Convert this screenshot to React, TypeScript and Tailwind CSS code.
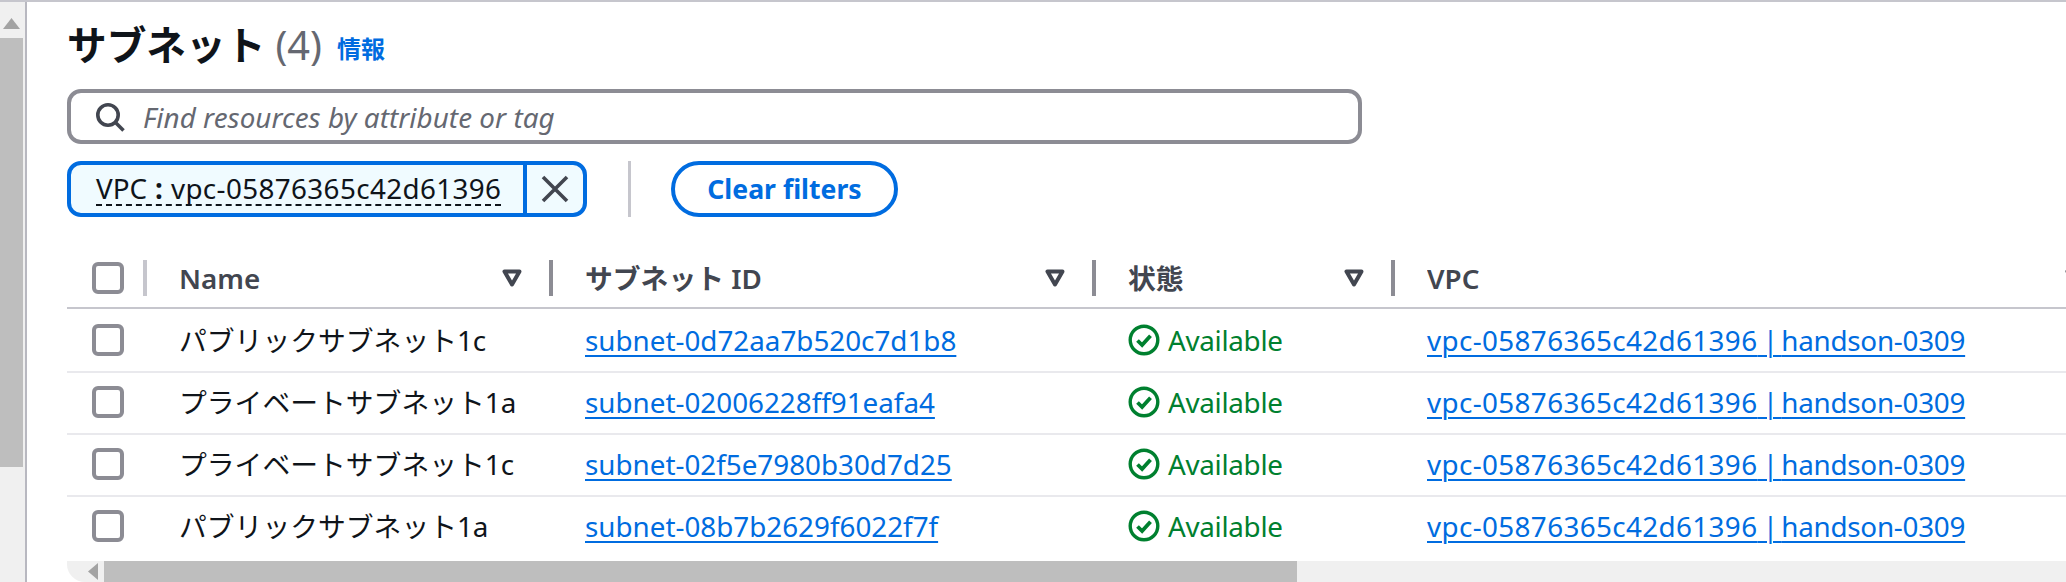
const SUBNETS = [
  { name: "パブリックサブネット1c", id: "subnet-0d72aa7b520c7d1b8" },
  { name: "プライベートサブネット1a", id: "subnet-02006228ff91eafa4" },
  { name: "プライベートサブネット1c", id: "subnet-02f5e7980b30d7d25" },
  { name: "パブリックサブネット1a", id: "subnet-08b7b2629f6022f7f" },
];

const VPC = "vpc-05876365c42d61396";

function Checkbox() {
  return <div className="box-border h-[32px] w-[32px] shrink-0 rounded-[6px] border-4 border-[#8c8c94] bg-white" />;
}

function SortIcon() {
  return (
    <svg className="h-[20px] w-[20px] shrink-0" viewBox="0 0 20 20" fill="none">
      <path d="M2.5 3.5h15L10 16.5z" stroke="#424650" strokeWidth="4" strokeLinejoin="round" />
    </svg>
  );
}

function HeaderCell({ label }: { label: string }) {
  return (
    <div className="flex items-center pr-[32px]">
      <span className="flex-1 font-semibold text-[#424650]">{label}</span>
      <SortIcon />
      <div className="ml-[27px] h-[36px] w-[4px] bg-[#8c8c94]" />
    </div>
  );
}

function AvailableIcon() {
  return (
    <svg className="h-[32px] w-[32px] shrink-0" viewBox="0 0 32 32" fill="none">
      <circle cx="16" cy="16" r="13.8" stroke="#00802f" strokeWidth="3.4" />
      <path d="M9.5 16.5l4.6 4.6 8.4-9.4" stroke="#00802f" strokeWidth="3.8" />
    </svg>
  );
}

const GRID = "grid grid-cols-[112px_406px_543px_299px_639px]";

export default function App() {
  return (
    <div className="flex h-[582px] w-[2066px] overflow-hidden border-t-2 border-[#c6c6cd] bg-white font-['Noto_Sans','Noto_Sans_CJK_JP',sans-serif] text-[27.8px] leading-[38px] text-[#0f141a]">
      <div className="flex w-[27px] shrink-0 flex-col border-r-2 border-[#b8b8c0] bg-[#f0f0f0]">
        <div className="flex h-[36px] w-[23px] items-center justify-center pt-[8px]">
          <svg className="h-[12px] w-[17px]" viewBox="0 0 17 12">
            <path d="M8.5 0L17 11H0z" fill="#a3a3a3" />
          </svg>
        </div>
        <div className="h-[429px] w-[23px] bg-[#bebebe]" />
      </div>

      <div className="flex min-w-0 flex-1 flex-col pl-[40px]">
        <div className="flex h-[87px] items-center">
          <h1 className="text-[39.7px] font-bold leading-none">サブネット</h1>
          <span className="ml-[10px] text-[39.7px] leading-none text-[#656871]">(4)</span>
          <a className="ml-[15px] mt-[6px] text-[24px] font-bold text-[#006ce0]">情報</a>
        </div>

        <div className="flex h-[55px] w-[1295px] items-center rounded-[14px] border-4 border-[#8c8c94] bg-white pl-[24px]">
          <svg className="h-[30px] w-[30px] shrink-0" viewBox="0 0 30 30" fill="none" stroke="#424650" strokeWidth="3.6">
            <circle cx="13" cy="13" r="10.2" />
            <path d="M20.5 20.5L28.5 28.5" />
          </svg>
          <span className="ml-[18px] tracking-[0.05px] italic text-[#656871]">Find resources by attribute or tag</span>
        </div>

        <div className="mt-[17px] flex h-[56px] items-stretch">
          <div className="flex w-[520px] overflow-hidden rounded-[14px] border-4 border-[#006ce0] bg-[#f0fbff]">
            <div className="flex flex-1 items-center pl-[25px]">
              <span className="whitespace-nowrap border-b-2 border-dashed border-[#0f141a] leading-[32px]">
                VPC<span className="px-[8px] font-bold">:</span>
                <span className="tracking-[0.38px]">{VPC}</span>
              </span>
            </div>
            <div className="flex w-[60px] items-center justify-center border-l-4 border-[#006ce0]">
              <svg className="h-[28px] w-[28px]" viewBox="0 0 28 28" fill="none" stroke="#424650" strokeWidth="3.6">
                <path d="M2 2l24 24M26 2L2 26" />
              </svg>
            </div>
          </div>
          <div className="ml-[41px] w-[3px] bg-[#c6c6cd]" />
          <button className="ml-[40px] flex w-[227px] items-center justify-center rounded-full border-4 border-[#006ce0] text-[26.6px] font-bold text-[#006ce0]">
            Clear filters
          </button>
        </div>

        <div className={`${GRID} mt-[31px] h-[61px] w-[1999px] items-center border-b-2 border-[#c6c6cd]`}>
          <div className="flex items-center pl-[25px]">
            <Checkbox />
            <div className="ml-[19px] h-[36px] w-[4px] bg-[#c6c6cd]" />
          </div>
          <HeaderCell label="Name" />
          <HeaderCell label="サブネット ID" />
          <HeaderCell label="状態" />
          <div className="flex items-center justify-between overflow-hidden">
            <span className="font-semibold text-[#424650]">VPC</span>
            <div className="mr-[-19px]">
              <SortIcon />
            </div>
          </div>
        </div>

        <div className="pt-[2px]">
          {SUBNETS.map((s, i) => (
            <div
              key={s.id}
              className={`${GRID} h-[62px] w-[1999px] items-center border-b-2 pb-[2px] ${i < 3 ? "border-[#e9e9ed]" : "border-transparent"}`}
            >
              <div className="pl-[25px]">
                <Checkbox />
              </div>
              <div>{s.name}</div>
              <a className="text-[#006ce0] underline decoration-2 underline-offset-[4px]">{s.id}</a>
              <div className="flex items-center gap-[8px] tracking-[-0.3px] text-[#00802f]">
                <AvailableIcon />
                Available
              </div>
              <a className="whitespace-nowrap text-[#006ce0] underline decoration-2 underline-offset-[4px]">
                <span className="tracking-[0.38px]">{VPC}</span>
                <span className="tracking-[-2px]"> | </span>
                <span className="tracking-[-0.25px]">handson-0309</span>
              </a>
            </div>
          ))}
        </div>

        <div className="mt-[2px] flex h-[21px] shrink-0 items-stretch rounded-bl-[18px] bg-[#f0f0f0]">
          <div className="flex w-[37px] items-center justify-center pl-[14px]">
            <svg className="h-[17px] w-[10px]" viewBox="0 0 10 17">
              <path d="M10 0v17L0 8.5z" fill="#a3a3a3" />
            </svg>
          </div>
          <div className="w-[1193px] bg-[#bebebe]" />
        </div>
      </div>
    </div>
  );
}
